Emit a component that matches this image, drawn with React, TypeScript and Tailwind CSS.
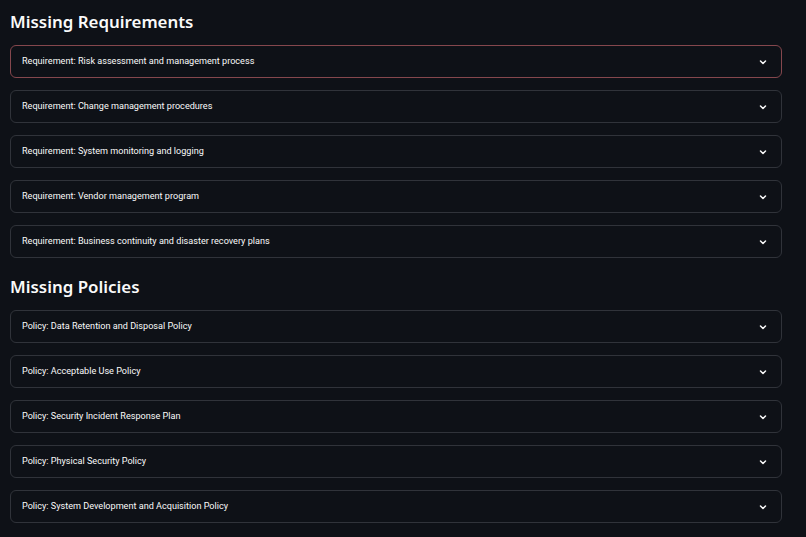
import React from "react";

const reqs = [
  "Requirement: Risk assessment and management process",
  "Requirement: Change management procedures",
  "Requirement: System monitoring and logging",
  "Requirement: Vendor management program",
  "Requirement: Business continuity and disaster recovery plans",
];
const pols = [
  "Policy: Data Retention and Disposal Policy",
  "Policy: Acceptable Use Policy",
  "Policy: Security Incident Response Plan",
  "Policy: Physical Security Policy",
  "Policy: System Development and Acquisition Policy",
];

function Chevron() {
  return (
    <svg width="12" height="12" viewBox="0 0 24 24" fill="none" stroke="#fafafa" strokeWidth="3" strokeLinecap="round" strokeLinejoin="round">
      <path d="M7 10l5 5 5-5" />
    </svg>
  );
}

function Item({ label, active }: { label: string; active?: boolean }) {
  return (
    <div
      className={
        "h-[33px] rounded-[6px] border flex items-center justify-between pl-[11px] pr-[12px] " +
        (active ? "border-[#85474d]" : "border-[#30333a]")
      }
    >
      <span className="text-[9.1px] text-[#fafafa] pt-[1px]" style={{ fontFamily: 'Roboto, sans-serif' }}>{label}</span>
      <Chevron />
    </div>
  );
}

function Section({ title, items, first }: { title: string; items: string[]; first?: boolean }) {
  return (
    <div className="flex flex-col">
      <h2 className="text-[16.9px] font-semibold text-[#fafafa] leading-[24px] h-[30px] mb-[8px] flex items-center">{title}</h2>
      <div className="flex flex-col gap-[12px]">
        {items.map((l, i) => (
          <Item key={l} label={l} active={first && i === 0} />
        ))}
      </div>
    </div>
  );
}

export default function App() {
  return (
    <div
      className="w-[806px] h-[537px] bg-[#0e1117] px-[10px] pt-[7px] overflow-hidden flex flex-col gap-[14px]"
      style={{ fontFamily: '"Noto Sans", sans-serif' }}
    >
      <div className="w-[772px]">
        <Section title="Missing Requirements" items={reqs} first />
      </div>
      <div className="w-[772px]">
        <Section title="Missing Policies" items={pols} />
      </div>
    </div>
  );
}
